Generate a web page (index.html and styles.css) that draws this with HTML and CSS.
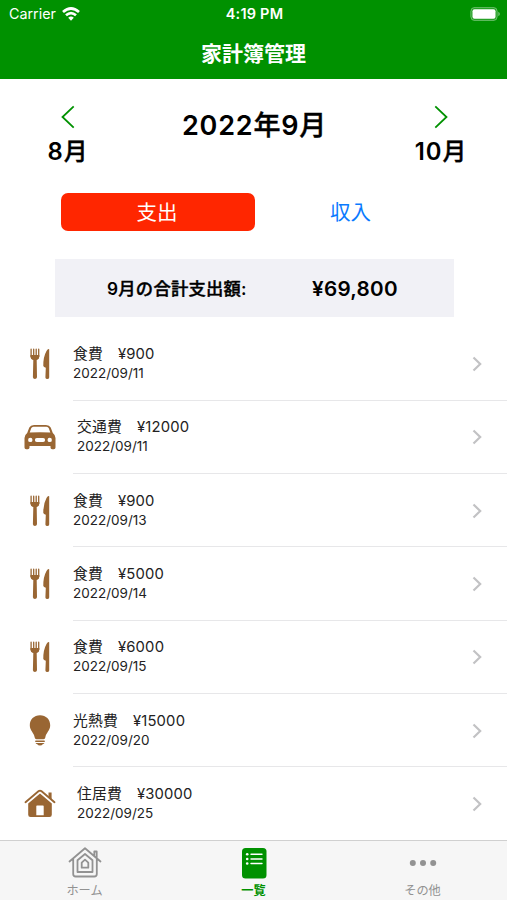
FILE: index.html
```html
<!DOCTYPE html>
<html lang="ja">
<head>
<meta charset="utf-8">
<title>家計簿管理</title>
<link rel="stylesheet" href="styles.css">
</head>
<body>
<svg class="defs" width="0" height="0" aria-hidden="true">
  <symbol id="food" viewBox="0 0 32 32">
    <path d="M7.1 1.2V8.600Q7.200 10.500 9.300 11.200H12.100Q14.600 10.500 14.700 8.600V1.200M9.700 1.200V9.500M12.200 1.200V9.500" fill="none" stroke="currentColor" stroke-width="1.300" stroke-linecap="round"/>
    <path d="M6.500 7H15.300V8.500Q15.100 11 12.700 12L13 29.300Q12.700 31 10.900 31T8.900 29.300L9.300 12Q6.600 11 6.500 8.500Z"/>
    <path d="M25.200 1.300V29.400Q25 31 23.300 31T21.400 29.400L21.800 19.800Q19.700 19.300 19.300 18Q19.100 9 22.500 3Q24 .5 25.200 1.300Z"/>
  </symbol>
  <symbol id="car" viewBox="0 0 32 32">
    <path fill-rule="evenodd" d="M10 4H22Q25.500 4 26.700 6.500L28.800 12Q31.500 14 31.500 17V26.500Q31.500 28.200 29.800 28.200H28.200Q26.500 28.200 26.500 26.500V25H5.500V26.500Q5.500 28.200 3.800 28.200H2.200Q.5 28.200 .5 26.500V17Q.5 14 3.200 12L5.300 6.500Q6.500 4 10 4ZM9.500 5.800Q7.800 5.900 7.200 7.300L5.700 11.500Q16 10.800 26.300 11.500L24.800 7.300Q24.200 5.900 22.500 5.800ZM6.300 16.700A2.200 2.200 0 1 0 6.300 21.100 2.200 2.200 0 1 0 6.300 16.700M25.700 16.700A2.200 2.200 0 1 0 25.700 21.100 2.200 2.200 0 1 0 25.700 16.700M12.800 17.100A1.900 1.900 0 0 0 12.800 20.900H19.200A1.900 1.900 0 0 0 19.200 17.100Z"/>
  </symbol>
  <symbol id="bulb" viewBox="0 0 32 32">
    <path d="M16 .3C10 .3 5.800 4.500 5.800 10.300C5.800 16 10 17.500 10.700 22.500Q10.900 24.200 12.500 24.200H19.500Q21.100 24.200 21.300 22.500C22 17.500 26.200 16 26.200 10.300C26.200 4.500 22 .3 16 .3Z"/>
    <path d="M12 25.500H20Q21 25.500 21 26.200T20 26.900H12Q11 26.900 11 26.200T12 25.500ZM11.500 28H20.500Q20 29 18.700 29.200Q18 30.500 16 30.500T13.300 29.200Q12 29 11.500 28Z"/>
  </symbol>
  <symbol id="house" viewBox="0 0 32 32">
    <path d="M1.500 14.200L14.700 3.100Q16 2.200 17.300 3.100L30.500 14.200" fill="none" stroke="currentColor" stroke-width="1.900" stroke-linecap="round"/>
    <path d="M24.500 4.500H27.600V11.500L24.500 8.900Z"/>
    <path fill-rule="evenodd" d="M16 5.500L27.800 15.400V26.700Q27.800 29 25.500 29H6.500Q4.200 29 4.200 26.700V15.400ZM13 17.500Q12.300 17.500 12.300 18.200V27.200H19.700V18.200Q19.700 17.500 19 17.500Z"/>
  </symbol>
</svg>

<header class="top">
  <div class="status">
    <div class="carrier">Carrier
      <svg class="wifi" viewBox="0 0 18 14" fill="none" stroke="currentColor" stroke-width="2.700"><path d="M1 5.100Q9-2.100 17 5.100M4 8.300Q9 3.800 14 8.300"/><path d="M9 13.700L6.200 10.700Q9 8.200 11.800 10.700Z" fill="currentColor" stroke="none"/></svg>
    </div>
    <div class="clock">4:19 PM</div>
    <svg class="battery" viewBox="0 0 30 14"><rect x=".8" y=".4" width="26.400" height="13.200" rx="4" fill="#fff" fill-opacity=".15" stroke="#fff" stroke-opacity=".35" stroke-width="1"/><rect x="2.500" y="2.300" width="23" height="9.400" rx="2" fill="#fff"/><path d="M28.200 4.800Q30 5.600 30 7T28.200 9.200Z" fill="#fff" opacity=".4"/></svg>
  </div>
  <h1 class="title">家計簿管理</h1>
</header>

<main class="content">
  <div class="months">
    <div class="side">
      <svg class="arrow" viewBox="0 0 14 24"><path d="M12.700 1.300L1.500 12L12.700 22.700"/></svg>
      <p>8<span class="jp">月</span></p>
    </div>
    <h2 class="current">2022<span class="jp">年</span>9<span class="jp">月</span></h2>
    <div class="side">
      <svg class="arrow" viewBox="0 0 14 24"><path d="M1.300 1.300L12.500 12L1.300 22.700"/></svg>
      <p>10<span class="jp">月</span></p>
    </div>
  </div>
  <div class="switch">
    <div class="tab on">支出</div>
    <div class="tab">収入</div>
  </div>
  <div class="total"><p class="label">9<span class="jp">月の合計支出額</span>:</p><p class="sum">¥69,800</p></div>

  <ul class="list">
    <li class="row"><svg class="icon"><use href="#food"/></svg><div class="text"><p>食費　¥900</p><p>2022/09/11</p></div><svg class="chev" viewBox="0 0 10 16"><path d="M1.500 1.500L8.200 8L1.500 14.500"/></svg></li>
    <li class="row wide"><svg class="icon"><use href="#car"/></svg><div class="text"><p>交通費　¥12000</p><p>2022/09/11</p></div><svg class="chev" viewBox="0 0 10 16"><path d="M1.500 1.500L8.200 8L1.500 14.500"/></svg></li>
    <li class="row"><svg class="icon"><use href="#food"/></svg><div class="text"><p>食費　¥900</p><p>2022/09/13</p></div><svg class="chev" viewBox="0 0 10 16"><path d="M1.500 1.500L8.200 8L1.500 14.500"/></svg></li>
    <li class="row"><svg class="icon"><use href="#food"/></svg><div class="text"><p>食費　¥5000</p><p>2022/09/14</p></div><svg class="chev" viewBox="0 0 10 16"><path d="M1.500 1.500L8.200 8L1.500 14.500"/></svg></li>
    <li class="row"><svg class="icon"><use href="#food"/></svg><div class="text"><p>食費　¥6000</p><p>2022/09/15</p></div><svg class="chev" viewBox="0 0 10 16"><path d="M1.500 1.500L8.200 8L1.500 14.500"/></svg></li>
    <li class="row"><svg class="icon"><use href="#bulb"/></svg><div class="text"><p>光熱費　¥15000</p><p>2022/09/20</p></div><svg class="chev" viewBox="0 0 10 16"><path d="M1.500 1.500L8.200 8L1.500 14.500"/></svg></li>
    <li class="row wide"><svg class="icon"><use href="#house"/></svg><div class="text"><p>住居費　¥30000</p><p>2022/09/25</p></div><svg class="chev" viewBox="0 0 10 16"><path d="M1.500 1.500L8.200 8L1.500 14.500"/></svg></li>
  </ul>
</main>

<nav class="tabbar">
  <div class="item">
    <svg viewBox="0 0 34 32" fill="none" stroke="currentColor" stroke-width="1.800" stroke-linejoin="round" stroke-linecap="round"><path d="M1.500 14.500L17 1.300L32.500 14.500M26.300 9V4.500H28.700V11M5.200 12V27Q5.200 29.500 7.700 29.500H26.300Q28.800 29.500 28.800 27V12"/><path d="M17 7L24.500 13.200V25H9.500V13.200Z"/><path d="M17 12.700L20.300 15.700V20.700H13.700V15.700Z"/></svg>
    <span>ホーム</span>
  </div>
  <div class="item active">
    <svg viewBox="0 0 34 32"><rect x="5" y="1" width="24.500" height="30.500" rx="3.500" fill="currentColor"/><g fill="#fff"><circle cx="10.200" cy="7.300" r="1.300"/><circle cx="10.200" cy="12" r="1.300"/><circle cx="10.200" cy="16.500" r="1.300"/></g><path d="M14 7.300H25M14 12H25M14 16.500H25" stroke="#fff" stroke-width="1.400" stroke-linecap="round"/></svg>
    <span>一覧</span>
  </div>
  <div class="item">
    <svg viewBox="0 0 34 32" fill="currentColor"><circle cx="6.800" cy="16" r="3"/><circle cx="17" cy="16" r="3"/><circle cx="27.200" cy="16" r="3"/></svg>
    <span>その他</span>
  </div>
</nav>
</body>
</html>
```
FILE: styles.css
```css
* { box-sizing: border-box; margin: 0; padding: 0; }
html, body { height: 900px; overflow: hidden; }
body {
  width: 507px;
  display: flex;
  flex-direction: column;
  background: #fff;
  color: #000;
  font-family: Inter, "Noto Sans CJK JP", sans-serif;
}
svg { display: block; flex: none; }
.defs { display: none; }
.top { height: 79px; background: #009100; color: #fff; flex: none; }
.status {
  height: 27px;
  display: grid;
  grid-template-columns: 1fr auto 1fr;
  align-items: center;
  padding: 0 7px 0 9px;
  font-size: 14.300px;
}
.carrier { display: flex; align-items: center; gap: 6px; }
.wifi { width: 18px; height: 14px; }
.clock { font-weight: 600; font-size: 14.500px; letter-spacing: .2px; }
.battery { width: 30px; height: 14px; justify-self: end; }
.title { text-align: center; font-size: 21px; line-height: 53px; font-weight: 600; }
.content { height: 760.500px; flex: none; }
.months { height: 114px; display: flex; justify-content: space-between; padding: 26px 39px 0 41px; }
.side { width: 54px; display: flex; flex-direction: column; align-items: center; font-size: 23.800px; line-height: 24px; font-weight: 600; letter-spacing: .9px; white-space: nowrap; }
.arrow { width: 14px; height: 24px; margin-bottom: 11px; fill: none; stroke: #009100; stroke-width: 1.800; }
.current { font-size: 27px; line-height: 41px; font-weight: 600; letter-spacing: .8px; }
.jp { font-weight: 500; -webkit-text-stroke: .4px currentColor; }
.switch { height: 38px; display: flex; padding-left: 61px; }
.tab { width: 191px; line-height: 39px; text-align: center; font-size: 20.500px; color: #0a7aff; }
.on { width: 194px; padding-right: 2px; background: #ff2600; color: #fff; border-radius: 7px; }
.total { margin: 28px 53px 10.500px 55px; height: 58px; background: #f1f1f6; display: flex; align-items: center; padding-left: 52px; font-weight: 600; white-space: nowrap; }
.label { width: 205px; font-size: 17.300px; letter-spacing: .25px; position: relative; top: -1px; }
.sum { font-size: 20.700px; letter-spacing: .25px; }
.list { list-style: none; }
.row { height: 73.330px; display: flex; align-items: center; padding-left: 24px; color: #222; background: linear-gradient(#e7e7e9, #e7e7e9) 73px 100% / 100% 1px no-repeat; }
.icon { width: 32px; height: 32px; color: #996633; fill: currentColor; }
.text { margin-left: 17px; flex: 1; font-size: 14.800px; line-height: 19px; letter-spacing: .18px; }
.text p:last-child { font-size: 13.500px; letter-spacing: 0; }
.wide .text { margin-left: 21px; }
.chev { width: 10px; height: 16px; margin-right: 25px; fill: none; stroke: #c2c2c4; stroke-width: 2.200; }
.tabbar { flex: 1; border-top: 1px solid #d0d0d0; background: #f6f6f6; display: flex; color: #929292; }
.item { flex: 1; display: flex; flex-direction: column; align-items: center; padding-top: 6px; font-size: 12.200px; line-height: 18px; font-weight: 400; }
.item svg { width: 34px; height: 32px; margin-bottom: 3px; }
.active { color: #009100; font-weight: 600; }
```
